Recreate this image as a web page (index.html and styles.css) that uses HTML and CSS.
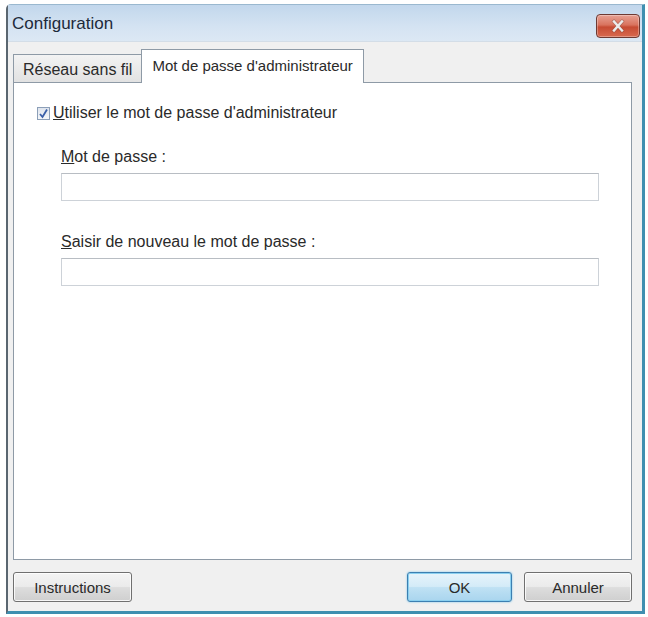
FILE: index.html
```html
<!DOCTYPE html>
<html lang="fr">
<head>
<meta charset="utf-8">
<title>Configuration</title>
<link rel="stylesheet" href="styles.css">
</head>
<body>
<div class="window">
  <div class="titlebar">
    <span class="title">Configuration</span>
    <button class="close" aria-label="Fermer">
      <svg width="16" height="14" viewBox="0 0 16 14"><path d="M4 2.5 L12 11.5 M12 2.5 L4 11.5" stroke="#7a4a42" stroke-width="3.6" stroke-linecap="square" opacity="0.45"/><path d="M4 2.5 L12 11.5 M12 2.5 L4 11.5" stroke="#ececec" stroke-width="2.4" stroke-linecap="square"/></svg>
    </button>
  </div>
  <div class="body">
    <div class="tabs">
      <div class="tab">Réseau sans fil</div>
      <div class="tab active">Mot de passe d'administrateur</div>
    </div>
    <div class="panel">
      <label class="check">
        <span class="box"><svg width="11" height="11" viewBox="0 0 11 11"><path d="M2 6 L4.5 9 L9 1.5" fill="none" stroke="#3a5fa8" stroke-width="1.8"/></svg></span>
        <span><u>U</u>tiliser le mot de passe d'administrateur</span>
      </label>
      <div class="field">
        <div class="flabel"><u>M</u>ot de passe :</div>
        <div class="input"></div>
      </div>
      <div class="field second">
        <div class="flabel"><u>S</u>aisir de nouveau le mot de passe :</div>
        <div class="input"></div>
      </div>
    </div>
    <div class="buttons">
      <button class="btn instr">Instructions</button>
      <span class="spacer"></span>
      <button class="btn default">OK</button>
      <button class="btn cancel">Annuler</button>
    </div>
  </div>
</div>
</body>
</html>
```

FILE: styles.css
```css
html, body {
  margin: 0;
  padding: 0;
  background: #ffffff;
}
body {
  width: 648px;
  height: 617px;
  font-family: "Liberation Sans", Arial, sans-serif;
  font-size: 16px;
  color: #2a2a2a;
}
.window {
  box-sizing: border-box;
  margin: 4px 3px 0 6px;
  height: 610px;
  border-left: 2px solid #5a6670;
  border-right: 3px solid #3f8fb0;
  border-bottom: 3px solid #3f8fb0;
  border-top: 1px solid #9ab8cf;
  border-top-left-radius: 5px;
  background: #f0f0f0;
  display: flex;
  flex-direction: column;
}
.titlebar {
  height: 36px;
  display: flex;
  align-items: flex-start;
  padding: 0 2px 0 4px;
  background: linear-gradient(#c2d7ec, #d4e3f2 60%, #dce8f4);
  border-bottom: 1px solid #d3dde7;
}
.title {
  flex: 1;
  font-size: 17px;
  line-height: 20px;
  margin-top: 9px;
  color: #1c2a3a;
}
.close {
  width: 44px;
  height: 24px;
  margin-top: 9px;
  border: 1px solid #6e3a33;
  border-radius: 4px;
  background: linear-gradient(#e8a294, #d9735e 45%, #c64b33 55%, #d86a50);
  display: flex;
  align-items: center;
  justify-content: center;
  padding: 0;
  box-shadow: inset 0 0 0 1px rgba(255,255,255,0.3);
}
.body {
  flex: 1;
  display: flex;
  flex-direction: column;
  padding: 0 10px 0 5px;
}
.tabs {
  display: flex;
  align-items: flex-end;
  height: 32px;
  padding-top: 8px;
  position: relative;
  z-index: 1;
}
.tab {
  box-sizing: border-box;
  height: 28px;
  padding: 2px 9px 0 9px;
  display: flex;
  align-items: center;
  border: 1px solid #8e9aa6;
  border-bottom: none;
  background: linear-gradient(#f3f3f3, #e2e2e2);
  font-size: 16px;
  color: #2a2a2a;
}
.tab.active {
  height: 34px;
  margin-bottom: -1px;
  margin-left: -1px;
  padding: 7px 10px 0 10px;
  background: #ffffff;
  align-items: flex-start;
  font-size: 15px;
  line-height: 18px;
}
.panel {
  box-sizing: border-box;
  height: 478px;
  background: #ffffff;
  border: 1px solid #8e9aa6;
  padding: 21px 32px 0 23px;
}
.check {
  display: flex;
  align-items: center;
  gap: 3px;
  height: 18px;
  line-height: 18px;
}
.box {
  box-sizing: border-box;
  width: 13px;
  height: 13px;
  border: 1px solid #8c9fb8;
  background: linear-gradient(#dfe5ee, #f4f6f9);
  display: flex;
  align-items: center;
  justify-content: center;
}
.field {
  padding-left: 24px;
}
.flabel {
  height: 18px;
  line-height: 18px;
  margin-top: 26px;
  margin-bottom: 7px;
}
.field.second .flabel {
  margin-top: 32px;
}
.input {
  box-sizing: border-box;
  height: 28px;
  border: 1px solid #cdd2d8;
  border-top-color: #b8bdc3;
  background: #ffffff;
}
.buttons {
  display: flex;
  align-items: center;
  gap: 12px;
  margin-top: 12px;
}
.spacer {
  flex: 1;
}
.btn {
  box-sizing: border-box;
  height: 30px;
  border: 1px solid #707070;
  border-radius: 3px;
  background: linear-gradient(#f4f4f4, #ebebeb 48%, #dddddd 52%, #cfcfcf);
  font-family: "Liberation Sans", Arial, sans-serif;
  font-size: 15px;
  color: #2a2a2a;
  padding: 0;
  box-shadow: inset 0 0 0 1px rgba(255,255,255,0.8);
}
.btn.instr {
  width: 119px;
}
.btn.default {
  width: 105px;
  border-color: #3c7fb1;
  background: linear-gradient(#e6f4fb, #d4ebf8 48%, #bfe1f4 52%, #a9d5ee);
  box-shadow: inset 0 0 0 1px #8ad0f0, 0 0 2px #6cc3ea;
}
.btn.cancel {
  width: 108px;
}
```
